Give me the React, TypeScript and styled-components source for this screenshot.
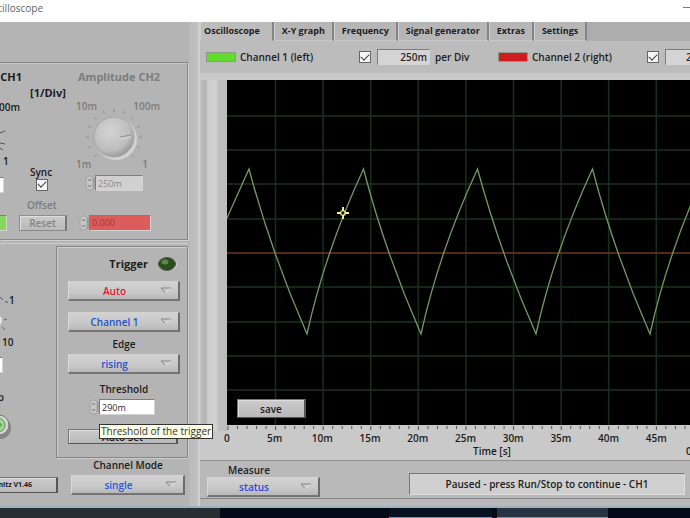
import React from 'react';
import styled, { createGlobalStyle } from 'styled-components';

const GlobalStyle = createGlobalStyle`
  * { box-sizing: border-box; }
  html, body { margin: 0; padding: 0; }
  body {
    background: #050b16;
    color: #1c1c1c;
    font-family: "Open Sans", "Noto Sans", sans-serif;
    font-size: 10px;
    font-weight: 600;
    overflow: hidden;
  }
  button, input, select { font: inherit; color: inherit; margin: 0; padding: 0; border-radius: 0; }
`;

const Window = styled.div`
  min-height: 100vh;
  display: flex;
  flex-direction: column;
`;

const TitleBar = styled.header`
  height: 22px;
  background: #fff;
  display: flex;
  justify-content: space-between;
  color: #666;
`;

const Clip = styled.div<{ $w: number }>`
  width: ${(p) => p.$w}px;
  flex: none;
  overflow: hidden;
  white-space: nowrap;
  display: flex;
  justify-content: flex-end;
`;

const WindowTitle = styled.h1`
  margin: 0;
  font-size: 10px;
  line-height: 16px;
  font-weight: 400;
`;

const MinimizeButton = styled.button`
  width: 8px;
  height: 16px;
  border: 0;
  background: none;
  overflow: hidden;
  svg { display: block; }
`;

const Main = styled.main`
  flex: 1;
  display: flex;
  background: #b5b5b5;
  border-bottom: 2px solid #9fb0bf;
`;

const Side = styled.aside`
  flex: none;
  width: 200px;
  padding: 40px 12px 0 0;
  display: flex;
  flex-direction: column;
  background: linear-gradient(to right, #b4b4b4 188px, #bebebe 192px, #bebebe 197px, #d0d0d0 198px);
`;

const AmplitudeGroup = styled.section`
  height: 178px;
  display: flex;
  border: 1px solid #858585;
  border-left: 0;
  box-shadow: 1px 1px 0 #d0d0d0, inset 0 1px 0 #c8c8c8;
`;

const Column = styled.div<{ $w?: number }>`
  ${(p) => (p.$w ? `flex: none; width: ${p.$w}px;` : 'flex: 1;')}
  display: flex;
  flex-direction: column;
`;

const Row = styled.div<{ $h: number; $top?: number; $left?: number; $gap?: number }>`
  flex: none;
  height: ${(p) => p.$h}px;
  margin-top: ${(p) => p.$top ?? 0}px;
  padding-left: ${(p) => p.$left ?? 0}px;
  gap: ${(p) => p.$gap ?? 0}px;
  display: flex;
  align-items: center;
`;

const Caption = styled.span<{ $large?: boolean; $dim?: boolean }>`
  font-size: ${(p) => (p.$large ? 11 : 10)}px;
  font-weight: ${(p) => (p.$large ? 700 : 600)};
  line-height: 12px;
  white-space: nowrap;
  color: ${(p) => (p.$dim ? '#7c7c7c' : '#1c1c1c')};
`;

const FieldLabel = styled.label<{ $large?: boolean; $dim?: boolean }>`
  font-size: ${(p) => (p.$large ? 11 : 10)}px;
  font-weight: ${(p) => (p.$large ? 700 : 600)};
  line-height: 12px;
  white-space: nowrap;
  text-align: center;
  color: ${(p) => (p.$dim ? '#7c7c7c' : '#1c1c1c')};
`;

const NumberField = styled.input<{ $w: number; $tone?: 'red' | 'green' | 'grey' | 'dim' }>`
  flex: none;
  width: ${(p) => p.$w}px;
  height: 16px;
  padding: 0 2px;
  font-size: 9px;
  font-weight: 400;
  border: 1px solid;
  border-color: #7d7d7d #d4d4d4 #d4d4d4 #7d7d7d;
  background: ${(p) =>
    ({ red: '#dc5c5c', green: '#86d660', grey: '#d4d4d4', dim: '#d0d0d0', none: '#fff' })[p.$tone ?? 'none']};
  color: ${(p) => (p.$tone === 'red' ? '#a03a3a' : p.$tone === 'dim' ? '#8c8c8c' : '#2a2a2a')};
`;

const ScaleField = styled(NumberField)<{ $indent?: boolean }>`
  font-size: 10px;
  font-weight: 600;
  text-align: ${(p) => (p.$indent ? 'left' : 'right')};
  padding-left: ${(p) => (p.$indent ? 20 : 2)}px;
`;

const Check = styled.input.attrs({ type: 'checkbox' })`
  appearance: none;
  flex: none;
  width: 12px;
  height: 12px;
  background: #f4f4f4;
  border: 1px solid #666;
  display: grid;
  place-items: center;
  &:checked::after {
    content: "";
    width: 7px;
    height: 4px;
    border: solid #444;
    border-width: 0 0 1px 1px;
    transform: rotate(-45deg) translate(1px, -1px);
  }
`;

const PushButton = styled.button<{ $w: number; $h: number; $dim?: boolean }>`
  flex: none;
  width: ${(p) => p.$w}px;
  height: ${(p) => p.$h}px;
  line-height: 12px;
  white-space: nowrap;
  background: linear-gradient(#cbcbcb, #b9b9b9);
  border: 1px solid;
  border-color: ${(p) => (p.$dim ? '#8f8f8f #777 #888 #8f8f8f' : '#777 #555 #555 #777')};
  border-right-width: 2px;
  box-shadow: inset 1px 1px 0 #dedede;
  color: ${(p) => (p.$dim ? '#858585' : '#1c1c1c')};
`;

const CreditText = styled.span`
  font-size: 7px;
  font-weight: 700;
  float: right;
  padding-right: 24px;
`;

const SpinnerBox = styled.span`
  flex: none;
  width: 10px;
  height: 16px;
  svg { display: block; }
`;

const RingBox = styled.div`
  display: grid;
  height: 20px;
  background: linear-gradient(#d2d2d2, #c8c8c8 60%, #b8b8b8);
  border: 1px solid;
  border-color: #d2d2d2 #6c6c6c #757575 #d9d9d9;
  border-right-width: 2px;
  border-bottom-width: 2px;
  svg { grid-area: 1 / 1; justify-self: end; align-self: center; margin-right: 6px; pointer-events: none; }
`;

const RingSelect = styled.select<{ $color: string }>`
  grid-area: 1 / 1;
  width: 100%;
  height: 100%;
  appearance: none;
  border: 0;
  background: none;
  padding-right: 18px;
  text-align: center;
  text-align-last: center;
  color: ${(p) => p.$color};
`;

const Dial = styled.div`
  flex: none;
  width: 84px;
  height: 70px;
  margin: 16px 0 0 4px;
  display: grid;
  grid-template-columns: 1fr 1fr;
  grid-template-rows: 1fr 1fr;
  > svg { grid-area: 1 / 1 / 3 / 3; margin: 8px 0 0 8px; }
`;

const DialMark = styled.span<{ $end?: boolean; $low?: boolean }>`
  grid-row: ${(p) => (p.$low ? 2 : 1)};
  grid-column: ${(p) => (p.$end ? 2 : 1)};
  justify-self: ${(p) => (p.$end ? 'end' : 'start')};
  align-self: ${(p) => (p.$low ? 'end' : 'start')};
  padding-right: ${(p) => (p.$end && p.$low ? 12 : 0)}px;
  line-height: 12px;
  color: #7c7c7c;
`;

const LowerGroup = styled.section`
  display: flex;
  margin-top: 3px;
  border-top: 1px solid #cccccc;
`;

const TriggerGroup = styled.fieldset`
  min-width: 0;
  height: 212px;
  margin: 2px 0 0;
  padding: 10px 7px 0 11px;
  border: 1px solid #868686;
  box-shadow: inset 1px 1px 0 #cdcdcd, 1px 1px 0 #cdcdcd;
  display: flex;
  flex-direction: column;
`;

const TriggerHead = styled.div`
  height: 14px;
  margin-bottom: 10px;
  padding-right: 3px;
  display: flex;
  align-items: center;
  justify-content: flex-end;
  gap: 10px;
`;

const RingStack = styled.div`
  display: grid;
  gap: 11px;
`;

const Centered = styled.div<{ $top: number }>`
  display: grid;
  justify-content: center;
  margin-top: ${(p) => p.$top}px;
`;

const RingSlot = styled.div`
  margin-top: 4px;
`;

const ThresholdRow = styled.div`
  position: relative;
  display: flex;
  margin: 4px 0 14px 21px;
`;

const Tooltip = styled.div`
  position: absolute;
  top: 25px;
  left: 10px;
  z-index: 2;
  padding: 0 1px;
  height: 15px;
  line-height: 13px;
  white-space: nowrap;
  font-weight: 400;
  background: #ffffe6;
  border: 1px solid #333;
  color: #333;
`;

const ModeBlock = styled.div`
  margin: 0 3px 0 15px;
`;

const Scope = styled.section`
  flex: 1;
  min-width: 0;
  display: flex;
  flex-direction: column;
  background: #b9b9b9;
  padding-bottom: 7px;
`;

const Tabs = styled.nav`
  height: 19px;
  display: flex;
  background: #adadad;
`;

const Tab = styled.button<{ $active?: boolean }>`
  border: 0;
  border-right: 2px solid #858585;
  border-left: 1px solid #cfcfcf;
  padding: 0 ${(p) => (p.$active ? 12 : 7)}px 0 ${(p) => (p.$active ? 3 : 7)}px;
  background: ${(p) => (p.$active ? '#bcbcbc' : '#b6b6b6')};
  border-bottom: 1px solid ${(p) => (p.$active ? '#bcbcbc' : '#c9c9c9')};
  font-size: 9px;
  font-weight: 700;
  line-height: 18px;
  white-space: nowrap;
`;

const Legend = styled.div`
  height: 32px;
  padding-left: 6px;
  display: flex;
  align-items: center;
  background: #bcbcbc;
  overflow: hidden;
`;

const Swatch = styled.span<{ $color: string }>`
  flex: none;
  width: 30px;
  height: 10px;
  margin-right: 4px;
  background: ${(p) => p.$color};
  border: 1px solid #8f9b87;
`;

const LegendItem = styled.div<{ $w: number }>`
  flex: none;
  width: ${(p) => p.$w}px;
  display: flex;
  align-items: center;
`;

const GraphPanel = styled.div`
  background: #c9c9c9;
  border-bottom: 1px solid #909090;
  padding-top: 7px;
`;

const PlotRow = styled.div`
  display: flex;
`;

const Gutter = styled.div`
  flex: none;
  width: 27px;
  background: linear-gradient(to right, #c4c4c4, #b4b4b4 4px, #b4b4b4 6px, #cfcfcf 8px, #d2d2d2 16px, #bdbdbd 19px, #bcbcbc);
`;

const Plot = styled.div`
  position: relative;
  flex: 1;
  height: 345px;
  background: #000;
  > svg { display: block; width: 100%; height: 100%; }
`;

const SaveSlot = styled.div`
  position: absolute;
  left: 10px;
  bottom: 7px;
`;

const AxisTicks = styled.svg`
  display: block;
  flex: 1;
  height: 6px;
`;

const AxisLabels = styled.div`
  display: flex;
  padding-left: 3px;
  overflow: hidden;
  line-height: 14px;
`;

const AxisLabel = styled.span`
  flex: 0 0 9.8%;
  text-align: center;
`;

const AxisTitle = styled.div`
  display: flex;
  justify-content: space-between;
  height: 15px;
  line-height: 13px;
  padding-left: 273px;
`;

const EdgeDigit = styled.span`
  flex: none;
  width: 4px;
`;

const Footer = styled.footer`
  flex: 1;
  display: flex;
  justify-content: space-between;
  padding: 2px 5px 0 7px;
  border-bottom: 1px solid #858585;
`;

const MeasureBlock = styled.div`
  width: 113px;
`;

const MeasureLabel = styled.label`
  display: block;
  padding-left: 21px;
  line-height: 14px;
`;

const StatusField = styled.output`
  width: 276px;
  height: 22px;
  margin-top: 10px;
  line-height: 20px;
  text-align: center;
  background: #d0d0d0;
  border: 1px solid;
  border-color: #777 #dedede #dedede #777;
`;

const Taskbar = styled.div`
  height: 10px;
  display: flex;
  align-items: stretch;
  background: #050b16;
`;

const TaskItem = styled.span<{ $w: number; $left?: number; $bg: string; $line?: boolean }>`
  width: ${(p) => p.$w}px;
  margin-left: ${(p) => p.$left ?? 0}px;
  background: ${(p) => p.$bg};
  border-bottom: ${(p) => (p.$line ? '1px solid #5d9cc6' : '0')};
`;

const gridX = Array.from({ length: 9 }, (_, i) => 48.5 + i * 47.6);
const gridY = [36, 70, 104, 139, 207, 242, 276, 310];

const wave = [22, 136, 251, 365]
  .map((x) => `Q${x + 22} 172 ${x + 58} 254Q${x + 76} 172 ${x + 114.5} 89`)
  .join('');

function Spinner() {
  return (
    <SpinnerBox>
      <svg width="10" height="16" viewBox="0 0 10 16" aria-hidden="true">
        <rect x="1" y="1" width="7" height="14" rx="3" fill="#c6c6c6" stroke="#a4a4a4" />
        <path d="M3 6l1.5-2 1.5 2M3 10l1.5 2 1.5-2" fill="none" stroke="#777" />
        <path d="M9 3v10" stroke="#8c8c8c" />
      </svg>
    </SpinnerBox>
  );
}

function Ring(props: { id: string; label?: string; value: string; options: string[]; color: string }) {
  return (
    <RingBox>
      <RingSelect id={props.id} aria-label={props.label} defaultValue={props.value} $color={props.color}>
        {props.options.map((o) => (
          <option key={o}>{o}</option>
        ))}
      </RingSelect>
      <svg width="12" height="7" viewBox="0 0 12 7" aria-hidden="true">
        <path d="M11 1H1l4 4.5" fill="none" stroke="#858585" />
        <path d="M5.500 5.500L10 1.500" fill="none" stroke="#e2e2e2" />
      </svg>
    </RingBox>
  );
}

function Knob() {
  const ticks = Array.from({ length: 13 }, (_, i) => ((135 + i * 22.5) * Math.PI) / 180);
  return (
    <svg width="60" height="60" viewBox="0 0 60 60" aria-hidden="true">
      <defs>
        <radialGradient id="knob" cx="0.4" cy="0.35" r="0.7">
          <stop offset="0" stopColor="#d4d4d4" />
          <stop offset="0.7" stopColor="#bdbdbd" />
          <stop offset="1" stopColor="#929292" />
        </radialGradient>
      </defs>
      {ticks.map((a, i) => (
        <line
          key={i}
          x1={30 + 25 * Math.cos(a)}
          y1={29 + 25 * Math.sin(a)}
          x2={30 + 28 * Math.cos(a)}
          y2={29 + 28 * Math.sin(a)}
          stroke="#8c8c8c"
        />
      ))}
      <circle cx="32" cy="31" r="21" fill="#d2d2d2" />
      <circle cx="30" cy="29" r="20" fill="url(#knob)" stroke="#a8a8a8" />
      <path d="M36 29l11-2" stroke="#929292" />
      <path d="M36 31l11-2" stroke="#ddd" />
    </svg>
  );
}

function AmplitudePanel() {
  return (
    <AmplitudeGroup>
      <Column $w={72}>
        <Row $h={14} $top={7}>
          <Clip $w={22}><Caption $large>Amplitude CH1</Caption></Clip>
        </Row>
        <Row $h={16} $top={1} $left={30}><Caption $large>[1/Div]</Caption></Row>
        <Row $h={12}><Clip $w={20}><Caption>100m</Caption></Clip></Row>
        <Row $h={42}>
          <svg width="8" height="42" viewBox="0 0 8 42" aria-hidden="true">
            <path d="M0 20l5-2M0 30l5 1M0 35l3 2" stroke="#555" fill="none" />
          </svg>
        </Row>
        <Row $h={11} $left={3}><Caption>1</Caption></Row>
        <Row $h={11} $left={30}><FieldLabel htmlFor="sync">Sync</FieldLabel></Row>
        <Row $h={15} $gap={32}>
          <Clip $w={4}><NumberField $w={48} aria-label="Amplitude CH1" defaultValue="250m" /></Clip>
          <Check id="sync" defaultChecked />
        </Row>
        <Row $h={12} $top={7} $left={27}><Caption $dim>Offset</Caption></Row>
        <Row $h={17} $top={3} $gap={12}>
          <Clip $w={7}><NumberField $w={60} $tone="green" aria-label="Offset CH1" /></Clip>
          <PushButton $w={48} $h={16} $dim>Reset</PushButton>
        </Row>
      </Column>
      <Column>
        <Row $h={14} $top={7} $left={6}><FieldLabel $large $dim htmlFor="amp2">Amplitude CH2</FieldLabel></Row>
        <Dial>
          <Knob />
          <DialMark>10m</DialMark>
          <DialMark $end>100m</DialMark>
          <DialMark $low>1m</DialMark>
          <DialMark $end $low>1</DialMark>
        </Dial>
        <Row $h={16} $top={5} $left={13}>
          <Spinner />
          <NumberField id="amp2" $w={48} $tone="dim" defaultValue="250m" />
        </Row>
        <Row $h={17} $top={23} $left={7}>
          <Spinner />
          <NumberField $w={62} $tone="red" aria-label="Offset CH2" defaultValue="0.000" />
        </Row>
      </Column>
    </AmplitudeGroup>
  );
}

function TriggerPanel() {
  return (
    <TriggerGroup aria-label="Trigger">
      <TriggerHead>
        <Caption $large>Trigger</Caption>
        <svg width="19" height="14" viewBox="0 0 19 14" aria-hidden="true">
          <ellipse cx="10" cy="7.5" rx="9" ry="6.5" fill="#d8d8d8" />
          <ellipse cx="9" cy="7" rx="8.5" ry="6.5" fill="#27501a" stroke="#555" />
          <ellipse cx="7" cy="5" rx="3.5" ry="2.5" fill="#5c8a48" />
        </svg>
      </TriggerHead>
      <RingStack>
        <Ring id="trigger-mode" label="Trigger mode" value="Auto" options={['Auto', 'Normal', 'Single', 'Off']} color="#dc2034" />
        <Ring id="trigger-source" label="Trigger source" value="Channel 1" options={['Channel 1', 'Channel 2']} color="#2450c8" />
      </RingStack>
      <Centered $top={6}><FieldLabel htmlFor="edge">Edge</FieldLabel></Centered>
      <RingSlot>
        <Ring id="edge" value="rising" options={['rising', 'falling']} color="#2450c8" />
      </RingSlot>
      <Centered $top={9}><FieldLabel htmlFor="threshold">Threshold</FieldLabel></Centered>
      <ThresholdRow>
        <Spinner />
        <NumberField id="threshold" $w={56} defaultValue="290m" aria-describedby="threshold-tip" />
        <Tooltip id="threshold-tip" role="tooltip">Threshold of the trigger</Tooltip>
      </ThresholdRow>
      <PushButton $w={110} $h={15}>Auto Set</PushButton>
    </TriggerGroup>
  );
}

function ControlPanel() {
  return (
    <Side>
      <AmplitudePanel />
      <LowerGroup>
        <Column $w={56}>
          <Row $h={12} $top={50} $gap={1}>
            <svg width="8" height="12" viewBox="0 0 8 12" aria-hidden="true">
              <path d="M0 3l3 3M5 8h3" stroke="#555" fill="none" />
            </svg>
            <Caption>1</Caption>
          </Row>
          <Row $h={30}>
            <svg width="8" height="30" viewBox="0 0 8 30" aria-hidden="true">
              <path d="M0 10q4 4 0 9z" fill="#e8e8e8" />
              <path d="M4 14l3-1M2 21l3 3" stroke="#666" fill="none" />
            </svg>
          </Row>
          <Row $h={12} $left={2}><Caption>10</Caption></Row>
          <Row $h={16} $top={9}>
            <Clip $w={3}><NumberField $w={40} aria-label="Time" defaultValue="50m" /></Clip>
          </Row>
          <Row $h={12} $top={18}><Clip $w={4}><Caption>Run/Stop</Caption></Clip></Row>
          <Row $h={30} $top={7}>
            <svg width="12" height="30" viewBox="0 0 12 30" aria-hidden="true">
              <circle cx="0" cy="18" r="11" fill="#878787" />
              <circle cx="-1" cy="15" r="10" fill="#d2d5cf" stroke="#777" />
              <circle cx="-2" cy="15" r="7" fill="#a9cf9c" stroke="#5f8d55" />
              <circle cx="0" cy="15" r="2" fill="#54bd43" />
            </svg>
          </Row>
          <Row $h={17} $top={36}>
            <Clip $w={58}><PushButton $w={90} $h={16}><CreditText>© C. Zeitnitz V1.46</CreditText></PushButton></Clip>
          </Row>
        </Column>
        <Column>
          <TriggerPanel />
          <ModeBlock>
            <Centered $top={1}><FieldLabel htmlFor="mode">Channel Mode</FieldLabel></Centered>
            <RingSlot>
              <Ring id="mode" value="single" options={['single', 'CH1+CH2', 'CH1-CH2']} color="#2458e0" />
            </RingSlot>
          </ModeBlock>
        </Column>
      </LowerGroup>
    </Side>
  );
}

function ScopePlot() {
  return (
    <Plot>
      <svg viewBox="0 0 463 345" preserveAspectRatio="none" role="img" aria-label="Channel 1 waveform">
        {gridX.map((x) => (
          <line key={x} x1={x} x2={x} y1="0" y2="345" stroke="#17301a" strokeWidth="1.5" />
        ))}
        {gridY.map((y) => (
          <line key={y} x1="0" x2="463" y1={y} y2={y} stroke="#1b3320" strokeWidth="1.5" />
        ))}
        <line x1="0" x2="463" y1="173" y2="173" stroke="#6b3a1e" strokeWidth="1.5" />
        <path d={`M0 138L22 89${wave}`} fill="none" stroke="#719b62" strokeWidth="1.3" />
        <g stroke="#f3f08c" strokeWidth="2">
          <path d="M110 133h4M118 133h4M116 127v4M116 135v4" />
          <rect x="114" y="131" width="4" height="4" fill="none" strokeWidth="1" />
        </g>
      </svg>
      <SaveSlot><PushButton $w={69} $h={19}>save</PushButton></SaveSlot>
    </Plot>
  );
}

function ScopePanel() {
  const tabs = ['Oscilloscope', 'X-Y graph', 'Frequency', 'Signal generator', 'Extras', 'Settings'];
  const marks = ['0', '5m', '10m', '15m', '20m', '25m', '30m', '35m', '40m', '45m'];
  return (
    <Scope>
      <Tabs role="tablist">
        {tabs.map((t, i) => (
          <Tab key={t} role="tab" aria-selected={i === 0} $active={i === 0}>{t}</Tab>
        ))}
      </Tabs>
      <Legend>
        <LegendItem $w={153}>
          <Swatch $color="#62dc2c" />
          <FieldLabel htmlFor="ch1">Channel 1 (left)</FieldLabel>
        </LegendItem>
        <LegendItem $w={139}>
          <Check id="ch1" defaultChecked />
          <Row $h={20} $left={6} $gap={5}>
            <ScaleField $w={53} $tone="grey" id="scale1" defaultValue="250m" />
            <FieldLabel htmlFor="scale1">per Div</FieldLabel>
          </Row>
        </LegendItem>
        <LegendItem $w={149}>
          <Swatch $color="#cf1c20" />
          <FieldLabel htmlFor="ch2">Channel 2 (right)</FieldLabel>
        </LegendItem>
        <LegendItem $w={80}>
          <Check id="ch2" defaultChecked />
          <Row $h={20} $left={6}>
            <ScaleField $indent $w={53} $tone="grey" aria-label="Channel 2 per Div" defaultValue="250m" />
          </Row>
        </LegendItem>
      </Legend>
      <GraphPanel>
        <PlotRow>
          <Gutter />
          <ScopePlot />
        </PlotRow>
        <PlotRow>
          <Gutter />
          <AxisTicks viewBox="0 0 463 6" preserveAspectRatio="none" aria-hidden="true">
            {Array.from({ length: 49 }, (_, i) => (
              <line key={i} x1={1 + i * 9.52} x2={1 + i * 9.52} y1="1" y2={i % 5 === 0 ? 5 : 4} stroke="#555" />
            ))}
          </AxisTicks>
        </PlotRow>
        <AxisLabels>
          {marks.map((m) => <AxisLabel key={m}>{m}</AxisLabel>)}
        </AxisLabels>
        <AxisTitle>
          <span>Time [s]</span>
          <Clip $w={4}><EdgeDigit>0</EdgeDigit></Clip>
        </AxisTitle>
      </GraphPanel>
      <Footer>
        <MeasureBlock>
          <MeasureLabel htmlFor="measure">Measure</MeasureLabel>
          <Ring id="measure" value="status" options={['status', 'Frequency and Voltage', 'Cursor']} color="#2c48d8" />
        </MeasureBlock>
        <StatusField>Paused - press Run/Stop to continue - CH1</StatusField>
      </Footer>
    </Scope>
  );
}

export default function App() {
  return (
    <Window>
      <GlobalStyle />
      <TitleBar>
        <Clip $w={43}><WindowTitle>Oscilloscope</WindowTitle></Clip>
        <MinimizeButton aria-label="Minimize">
          <svg width="8" height="16" viewBox="0 0 8 16"><path d="M1 7.500h7" stroke="#777" /></svg>
        </MinimizeButton>
      </TitleBar>
      <Main>
        <ControlPanel />
        <ScopePanel />
      </Main>
      <Taskbar>
        <TaskItem $w={220} $bg="#292e33" />
        <TaskItem $w={103} $left={169} $bg="#06101f" $line />
        <TaskItem $w={111} $left={5} $bg="#273340" $line />
      </Taskbar>
    </Window>
  );
}
